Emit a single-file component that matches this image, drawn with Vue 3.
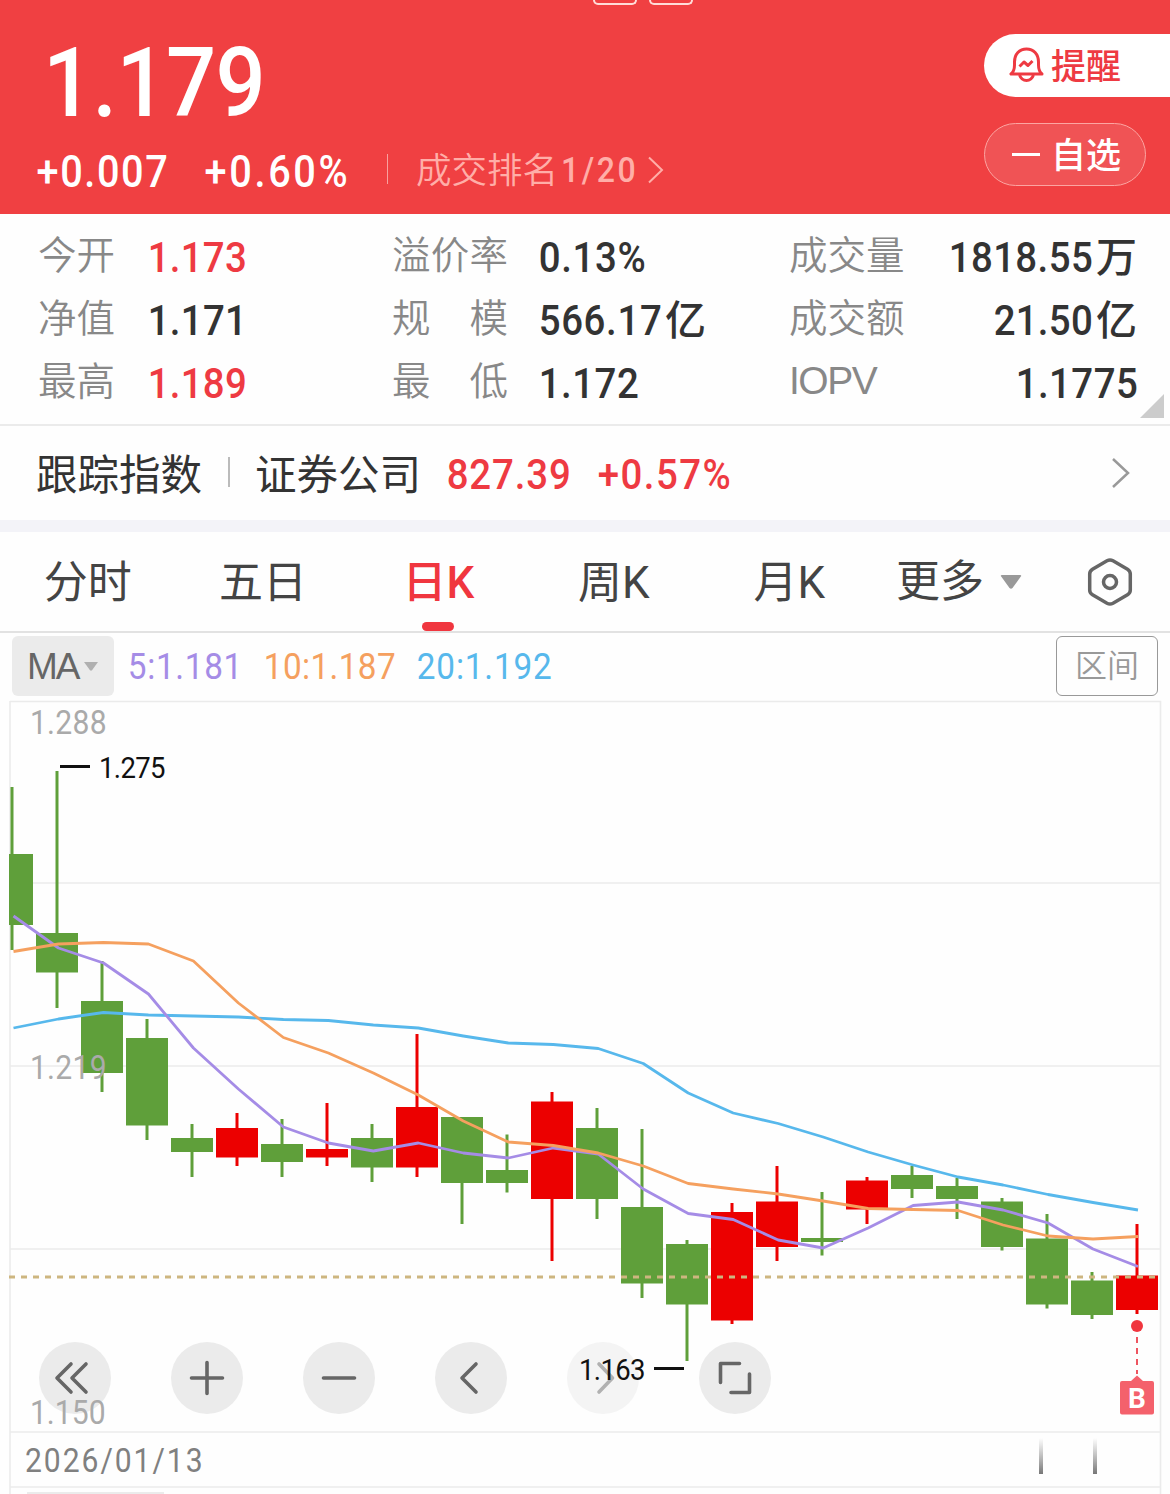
<template>
  <div class="quote-page">
    <!-- 顶部行情 -->
    <header class="quote-header">
      <div class="status-strip">
        <i></i>
        <i></i>
      </div>
      <div class="header-main">
        <div class="price-block">
          <Num class="price" text="1.179" :w="218" :h="69" :weight="500" />
          <div class="change-row">
            <Num text="+0.007" :w="129" :h="31" :weight="500" />
            <Num class="change-rate" text="+0.60%" :w="141" :h="31" :weight="500" />
            <span class="split"></span>
            <span class="rank">成交排名</span>
            <Num class="rank-num" text="1/20" :w="73" :h="25" :weight="500" />
            <svg class="rank-arrow" width="18" height="28" viewBox="0 0 18 28">
              <path d="M2 1.5 15 14 2 26.5" />
            </svg>
          </div>
        </div>
        <div class="header-actions">
          <button class="remind-btn">
            <svg width="35" height="37" viewBox="0 0 35 37">
              <path d="M2 27h31c-3-2.500-3.500-5-3.500-9v-3C29.500 7 24.500 2 17.500 2S5.500 7 5.500 15v3c0 4-.5 6.500-3.500 9z" />
              <path d="M10.500 28c1.500 4 4 5.500 7 5.500s5.500-1.500 7-5.500" />
              <path d="M10.500 19.500 15 15l4 3.500 4.500-4.500" />
            </svg>
            <span>提醒</span>
          </button>
          <button class="fav-btn">
            <i></i>
            <span>自选</span>
          </button>
        </div>
      </div>
    </header>

    <!-- 指标 -->
    <section class="stats">
      <div v-for="(col, ci) in stats" :key="ci" class="stat-col" :class="'col-' + ci">
        <div v-for="item in col" :key="item.label" class="stat-row">
          <span v-if="item.latin" class="stat-label latin">{{ item.label }}</span>
          <span v-else class="stat-label">
            <b v-for="ch in item.label" :key="ch">{{ ch }}</b>
          </span>
          <span class="stat-value" :class="{ up: item.up }">
            <Num :text="item.value" :w="item.w" :h="30" :weight="500" />
            <span v-if="item.unit" class="unit">{{ item.unit }}</span>
          </span>
        </div>
      </div>
      <i class="corner"></i>
    </section>

    <!-- 跟踪指数 -->
    <section class="index-row">
      <span class="index-title">跟踪指数</span>
      <span class="index-split"></span>
      <span class="index-title">证券公司</span>
      <Num class="index-price" text="827.39" :w="122" :h="30" :weight="500" />
      <Num class="index-rate" text="+0.57%" :w="131" :h="30" :weight="500" />
      <svg class="index-arrow" width="22" height="32" viewBox="0 0 22 32">
        <path d="M3 2 18 16 3 30" />
      </svg>
    </section>

    <!-- 周期切换 -->
    <nav class="tabs">
      <div v-for="tab in tabs" :key="tab" class="tab" :class="{ active: tab === current }" @click="current = tab">
        {{ tab }}
      </div>
      <div class="tab more">
        更多
        <svg width="22" height="16" viewBox="0 0 22 16">
          <path d="M2 1h18q2 0 .8 1.600L12.500 14q-1.500 1.500-3 0L1.200 2.600Q0 1 2 1z" />
        </svg>
      </div>
      <svg class="setting" width="46" height="50" viewBox="0 0 46 50">
        <path d="M20 3.800q3-1.600 6 0l14.500 8.400q2.800 1.700 2.800 4.800v16q0 3.100-2.800 4.800L26 46.200q-3 1.600-6 0L5.500 37.800Q2.700 36.100 2.700 33V17q0-3.100 2.800-4.800z" />
        <circle cx="23" cy="25" r="6.500" />
      </svg>
    </nav>

    <!-- 均线 -->
    <div class="ma-row">
      <div class="ma-select">
        <span>MA</span>
        <svg width="14" height="9" viewBox="0 0 14 9"><path d="M0 0h14L8 8.300q-1 .9-2 0z" /></svg>
      </div>
      <Num class="ma5" text="5:1.181" :w="110" :h="26" />
      <Num class="ma10" text="10:1.187" :w="130" :h="26" />
      <Num class="ma20" text="20:1.192" :w="133" :h="26" />
      <button class="range-btn">区间</button>
    </div>

    <!-- K线图 -->
    <div class="chart">
      <div class="toolbar">
        <button v-for="(d, i) in tools" :key="i" :class="{ disabled: i === 4 }">
          <svg width="72" height="72" viewBox="0 0 72 72"><path :d="d" /></svg>
        </button>
      </div>
      <svg class="chart-svg" width="1170" height="794" viewBox="0 700 1170 794">
        <g class="grid">
          <path d="M10 701.500H1160.500V1494M10 701V1494" />
          <path d="M10 883H1160M10 1066H1160M10 1249H1160M10 1432H1160M10 1487H1160" />
        </g>
        <g v-for="(k, i) in candles" :key="i" :class="k[4] ? 'rise' : 'fall'">
          <rect :x="10.5 + i * 45" :y="k[2]" width="3" :height="k[3] - k[2]" />
          <rect :x="i ? 45 * i - 9 : 9" :y="k[0]" :width="i ? 42 : 24" :height="k[1] - k[0]" />
        </g>
        <polyline class="line ma20" :points="toPoints(ma20)" />
        <polyline class="line ma5" :points="toPoints(ma5)" />
        <polyline class="line ma10" :points="toPoints(ma10)" />
        <path class="last-price" d="M9 1277H1160" />

        <text
          v-for="l in labels"
          :key="l.text"
          :class="l.cls"
          v-bind="fit(l.text, l.x, l.y, l.w, l.h)"
        >{{ l.text }}</text>
        <path class="mark" d="M60 766.500H90M654 1368.500H684" />

        <!-- 买点 -->
        <g class="buy">
          <circle cx="1137" cy="1326" r="6" />
          <path class="buy-dash" d="M1137 1337V1374" />
          <path class="buy-flag" d="M1122 1381h9l6-5.500 6 5.500h9q2 0 2 2v29.500q0 2-2 2h-30q-2 0-2-2V1383q0-2 2-2z" />
          <text x="1137" y="1407.500" text-anchor="middle">B</text>
        </g>

        <defs>
          <linearGradient id="bar" x1="0" y1="0" x2="0" y2="1">
            <stop offset="0" stop-color="#888" stop-opacity="0" />
            <stop offset="1" stop-color="#777" />
          </linearGradient>
        </defs>
        <rect x="1039" y="1438" width="4" height="36" fill="url(#bar)" />
        <rect x="1093" y="1438" width="4" height="36" fill="url(#bar)" />
        <rect x="27" y="1492" width="137" height="2" fill="#ebebeb" />
      </svg>
    </div>
  </div>
</template>

<script setup>
import { ref, h } from 'vue'

// 字形横向压缩比例
const SX = 0.91

// 数字左右留白，单位 em
const bearing = (ch, first) => {
  if (ch === '1') return first ? 0.035 : 0.1
  return first ? 0.035 : 0.02
}

// 按可见宽度和字高计算文字属性，多余宽度分给字间距
const fit = (text, x, y, w, height) => {
  const size = height / 0.711
  const left = bearing(text[0], true) * size
  const right = bearing(text[text.length - 1], false) * size
  return {
    x: -left,
    y: 0,
    transform: `translate(${x} ${y}) scale(${SX} 1)`,
    'font-size': size,
    textLength: w / SX + left + right,
    lengthAdjust: 'spacing'
  }
}

// 窄体数字
const Num = (props) =>
  h('svg', { width: props.w, height: props.h, style: { overflow: 'visible', flex: 'none', display: 'block' } }, [
    h('text', {
      ...fit(props.text, 0, props.h, props.w, props.h),
      fill: 'currentColor',
      'font-weight': props.weight || 400,
      'font-family': 'Roboto, sans-serif'
    }, props.text)
  ])
Num.props = ['text', 'w', 'h', 'weight']

const stats = [
  [
    { label: '今开', value: '1.173', w: 97, up: true },
    { label: '净值', value: '1.171', w: 94 },
    { label: '最高', value: '1.189', w: 97, up: true }
  ],
  [
    { label: '溢价率', value: '0.13%', w: 105 },
    { label: '规模', value: '566.17', w: 121, unit: '亿' },
    { label: '最低', value: '1.172', w: 98 }
  ],
  [
    { label: '成交量', value: '1818.55', w: 142, unit: '万' },
    { label: '成交额', value: '21.50', w: 97, unit: '亿' },
    { label: 'IOPV', value: '1.1775', w: 120, latin: true }
  ]
]

const tabs = ['分时', '五日', '日K', '周K', '月K']
const current = ref('日K')

const tools = [
  'M32 22 18 36 32 50M47 22 33 36 47 50',
  'M20.500 36H51.500M36 20.500V51.500',
  'M20.500 36H51.500',
  'M41 22 27 36 41 50',
  'M32 22 45.500 36 32 50',
  'M40.500 21.500H21.500V40.500M50.500 32V50.500H32'
]

// [实体上, 实体下, 最高, 最低, 是否上涨]
const candles = [
  [854, 925, 787, 950, 0],
  [933, 972.5, 771, 1008, 0],
  [1001, 1073, 961, 1092, 0],
  [1038, 1125.5, 1019, 1140, 0],
  [1138, 1152, 1124, 1177, 0],
  [1128, 1157.5, 1113, 1166, 1],
  [1144, 1162, 1119, 1177, 0],
  [1149, 1157.5, 1103, 1166, 1],
  [1138, 1167.5, 1124, 1182, 0],
  [1107, 1167.5, 1034, 1177, 1],
  [1117, 1183, 1117, 1224, 0],
  [1170, 1183, 1134.5, 1192.5, 0],
  [1101.5, 1199, 1092, 1261, 1],
  [1128, 1199, 1108, 1219, 0],
  [1207, 1283.5, 1129, 1298, 0],
  [1244, 1304.5, 1240, 1361, 0],
  [1212, 1320.5, 1203, 1324, 1],
  [1201.5, 1247, 1166, 1261, 1],
  [1238, 1242, 1192, 1255.5, 0],
  [1180.5, 1209.5, 1177, 1224, 1],
  [1175, 1189, 1166, 1198, 0],
  [1186, 1199, 1178, 1219, 0],
  [1201.5, 1247, 1198, 1250.5, 0],
  [1238.5, 1304.5, 1214, 1308.5, 0],
  [1280.5, 1315, 1272, 1319, 0],
  [1275.5, 1310, 1224, 1314, 1]
]

const ma5 = [916, 948, 963, 994, 1048, 1089, 1127, 1143, 1151, 1143, 1153, 1158, 1148, 1154, 1189, 1213.5, 1219.5, 1240, 1248, 1228, 1205.5, 1202, 1210, 1223, 1249, 1266.5]
const ma10 = [951.5, 944, 942.5, 944, 961, 1003, 1037.5, 1053, 1073, 1095, 1121, 1142, 1145.5, 1153, 1166, 1183.5, 1189, 1194, 1201, 1208.5, 1209.5, 1210.5, 1225, 1236, 1239, 1236.5]
const ma20 = [1028, 1019, 1012.5, 1015, 1016, 1017, 1019.5, 1020.5, 1025, 1028, 1036, 1043, 1044.5, 1048.5, 1063.5, 1093, 1113, 1123.5, 1137, 1152, 1165, 1177, 1185, 1194.5, 1202.5, 1210]

const toPoints = (arr) => arr.map((y, i) => `${13.5 + i * 44.98},${y}`).join(' ')

const labels = [
  { text: '1.288', x: 31, y: 734, w: 75, h: 23.5, cls: 'axis' },
  { text: '1.219', x: 31, y: 1079, w: 75, h: 23.5, cls: 'axis' },
  { text: '1.150', x: 31, y: 1424, w: 74, h: 23.5, cls: 'axis' },
  { text: '1.275', x: 100, y: 778, w: 65, h: 21.5, cls: 'peak' },
  { text: '1.163', x: 580, y: 1380, w: 65, h: 21.5, cls: 'peak' },
  { text: '2026/01/13', x: 26, y: 1472, w: 176, h: 23.5, cls: 'date' }
]
</script>

<style>
body {
  margin: 0;
  background: #fefefe;
}
</style>

<style scoped>
.quote-page {
  width: 1170px;
  height: 1494px;
  overflow: hidden;
  background: #fefefe;
  color: #333;
  font-family: Roboto, 'Noto Sans CJK SC', sans-serif;
}

button {
  padding: 0;
  margin: 0;
  border: none;
  font-family: inherit;
}

svg {
  flex: none;
  display: block;
}

/* 顶部 */
.quote-header {
  height: 214px;
  background: #f04042;
  color: #fff;
}

.status-strip {
  height: 5px;
  padding-left: 593px;
  display: flex;
  gap: 12px;
}

.status-strip i {
  box-sizing: border-box;
  width: 44px;
  height: 5px;
  border: 2px solid #ffdcd8;
  border-top: none;
  border-radius: 0 0 6px 6px;
}

.header-main {
  display: flex;
  justify-content: space-between;
}

.price-block {
  padding: 42px 0 0 46px;
}

.change-row {
  display: flex;
  align-items: center;
  height: 36px;
  margin: 37px 0 0 -8px;
}

.change-rate {
  margin-left: 39px;
}

.split {
  width: 1px;
  height: 30px;
  margin: -4px 28px 0 40px;
  background: #f9a09e;
}

.rank {
  font-size: 35.5px;
  font-weight: 350;
  line-height: 36px;
  color: #ffaea8;
}

.rank-num {
  margin: -3px 0 0 4px;
  color: #ffaea8;
}

.rank-arrow {
  margin: -3px 0 0 12px;
  fill: none;
  stroke: #ffaea8;
  stroke-width: 2;
}

.header-actions {
  width: 186px;
  padding-top: 29px;
}

.remind-btn,
.fav-btn {
  box-sizing: border-box;
  display: flex;
  align-items: center;
  height: 63px;
  font-size: 35px;
  font-weight: 500;
  line-height: 40px;
}

.remind-btn {
  width: 186px;
  padding-left: 25px;
  border-radius: 32px 0 0 32px;
  background: #fff;
  color: #ee3a42;
}

.remind-btn svg {
  fill: none;
  stroke: #ee3a42;
  stroke-width: 3;
  stroke-linejoin: round;
}

.remind-btn span {
  margin: 4px 0 0 7px;
}

.fav-btn {
  width: 162px;
  margin-top: 26px;
  padding-left: 27px;
  border: 1.5px solid #fca5a2;
  border-radius: 32px;
  background: #f05355;
  color: #fff;
}

.fav-btn i {
  width: 28px;
  height: 3px;
  background: #fff;
}

.fav-btn span {
  margin: 5px 0 0 11px;
}

/* 指标 */
.stats {
  position: relative;
  box-sizing: border-box;
  display: flex;
  height: 212px;
  padding: 8px 33px 0 38px;
  border-bottom: 2px solid #ebebeb;
}

.col-0 {
  width: 354px;
}

.col-1 {
  width: 397px;
}

.col-2 {
  flex: 1;
}

.stat-row {
  display: flex;
  align-items: center;
  height: 63px;
}

.stat-label {
  display: flex;
  justify-content: space-between;
  margin-top: 5px;
  font-size: 38.5px;
  line-height: 50px;
  color: #888;
}

.stat-label b {
  font-weight: 350;
}

.stat-label.latin {
  margin-top: 2px;
  font-family: 'Liberation Sans', sans-serif;
  font-size: 39px;
  letter-spacing: -1.5px;
  line-height: 44px;
}

.col-0 .stat-label {
  width: 77px;
  margin-right: 34px;
}

.col-1 .stat-label {
  width: 116px;
  margin-right: 32px;
}

.stat-value {
  display: flex;
  align-items: center;
  margin-top: 7px;
}

.col-2 .stat-value {
  margin-left: auto;
}

.unit {
  margin: 2px 0 0 4px;
  font-size: 41px;
  font-weight: 500;
  line-height: 40px;
}

.up {
  color: #ee3a42;
}

.corner {
  position: absolute;
  right: 6px;
  bottom: 6px;
  border-left: 24px solid transparent;
  border-bottom: 24px solid #ccc;
}

/* 跟踪指数 */
.index-row {
  box-sizing: border-box;
  display: flex;
  align-items: center;
  height: 94px;
  padding: 0 38px 0 36px;
}

.index-title {
  margin-top: 5px;
  font-size: 41.5px;
  line-height: 50px;
}

.index-split {
  width: 2px;
  height: 30px;
  margin: -2px 25px 0 26px;
  background: #bbb;
}

.index-price {
  margin: 2px 29px 0 27px;
  color: #ee3a42;
}

.index-rate {
  margin-top: 2px;
  color: #ee3a42;
}

.index-arrow {
  margin-left: auto;
  fill: none;
  stroke: #999;
  stroke-width: 2.5;
}

/* 周期 */
.tabs {
  box-sizing: border-box;
  display: flex;
  align-items: center;
  height: 113px;
  border-top: 12px solid #f3f3f8;
  border-bottom: 2px solid #e2e2e2;
}

.tab {
  position: relative;
  width: 175.4px;
  height: 99px;
  font-size: 44px;
  line-height: 103px;
  text-align: center;
  color: #444;
}

.tab.active {
  color: #f0363f;
  font-weight: 500;
}

.tab.active::after {
  content: '';
  position: absolute;
  left: 71px;
  bottom: 0;
  width: 32px;
  height: 9px;
  border-radius: 5px;
  background: #f0363f;
}

.tab.more {
  display: flex;
  align-items: center;
  width: 192px;
  line-height: 99px;
  padding: 2px 0 0 19px;
  height: 97px;
}

.tab.more svg {
  margin: -2px 0 0 16px;
  fill: #999;
}

.setting {
  margin-left: -1px;
  fill: none;
  stroke: #666;
  stroke-width: 3.5;
}

/* 均线 */
.ma-row {
  box-sizing: border-box;
  display: flex;
  align-items: center;
  height: 67px;
  padding: 0 12px 1px;
}

.ma-select {
  box-sizing: border-box;
  display: flex;
  align-items: center;
  width: 102px;
  height: 60px;
  margin-right: 15px;
  padding: 2px 0 0 15px;
  border-radius: 6px;
  background: #ebebeb;
  color: #666;
  font-family: 'Liberation Sans', sans-serif;
  font-size: 37px;
  letter-spacing: -2px;
}

.ma-select svg {
  margin: -2px 0 0 5px;
  fill: #b0b0b0;
}

.ma5 {
  color: #a58ce6;
}

.ma10 {
  margin-left: 26px;
  color: #f5a05f;
}

.ma20 {
  margin-left: 23px;
  color: #57b8ec;
}

.range-btn {
  box-sizing: border-box;
  width: 102px;
  height: 60px;
  margin-left: auto;
  border: 1.5px solid #999;
  border-radius: 6px;
  background: none;
  color: #999;
  font-size: 32px;
  font-weight: 350;
  line-height: 57px;
}

/* 图表 */
.chart {
  position: relative;
  height: 794px;
}

.chart-svg {
  position: relative;
  pointer-events: none;
}

.toolbar {
  position: absolute;
  left: 39px;
  top: 642px;
  display: flex;
  gap: 60px;
}

.toolbar button {
  width: 72px;
  height: 72px;
  border-radius: 50%;
  background: #ebebeb;
}

.toolbar path {
  fill: none;
  stroke: #666;
  stroke-width: 3.6;
  stroke-linecap: round;
  stroke-linejoin: round;
}

.toolbar .disabled {
  opacity: 0.5;
}

.grid path {
  fill: none;
  stroke: #ebebeb;
  stroke-width: 1.6;
}

.rise {
  fill: #ec0000;
}

.fall {
  fill: #5f9f3a;
}

.line {
  fill: none;
  stroke: currentColor;
  stroke-width: 2.8;
  stroke-linejoin: round;
}

.last-price {
  stroke: #cdb680;
  stroke-width: 3;
  stroke-dasharray: 6 6;
}

.chart-svg text {
  font-family: Roboto, sans-serif;
}

.axis {
  fill: #aaa;
}

.peak {
  fill: #111;
}

.date {
  fill: #808080;
}

.mark {
  stroke: #111;
  stroke-width: 3;
}

.buy circle {
  fill: #f0363f;
}

.buy-dash {
  stroke: #ee5560;
  stroke-width: 2;
  stroke-dasharray: 6 5;
}

.buy-flag {
  fill: #f4616c;
}

.buy text {
  fill: #fff;
  font-size: 28px;
  font-weight: 700;
}
</style>
